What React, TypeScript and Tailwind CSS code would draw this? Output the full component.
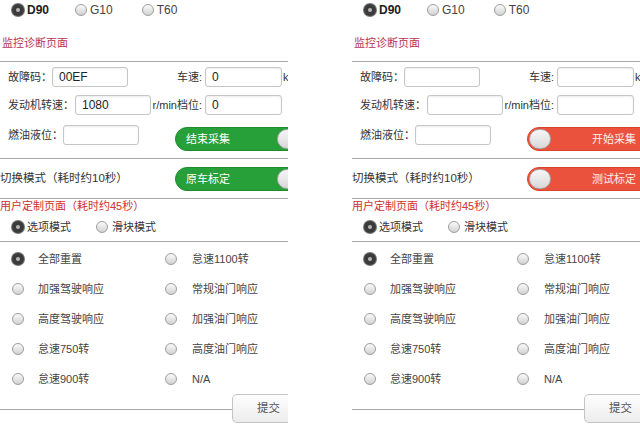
import React from "react";

const font = "font-['Liberation_Sans','Noto_Sans_CJK_SC',sans-serif]";

function Radio({ on = false }: { on?: boolean }) {
  if (on) {
    return (
      <span className="flex h-[12px] w-[12px] shrink-0 items-center justify-center rounded-full bg-[#3b3b3b] shadow-[0_0_0_1px_#777]">
        <span className="h-[4px] w-[4px] rounded-full bg-[#b8b8b8]" />
      </span>
    );
  }
  return (
    <span className="h-[12px] w-[12px] shrink-0 rounded-full border border-[#9d9d9d] bg-linear-to-b from-[#fafafa] to-[#d2d2d2]" />
  );
}

function Field({ value, w }: { value: string; w: string }) {
  return (
    <div
      className={`${w} flex h-[20px] shrink-0 items-center rounded-[3px] border border-[#c6c6c6] bg-white pl-[6px] text-[12px] text-[#222] shadow-[inset_0_1px_2px_rgba(0,0,0,0.08)]`}
    >
      {value}
    </div>
  );
}

function Toggle({ on, label }: { on: boolean; label: string }) {
  // on = green with knob on the right, off = red with knob on the left
  return (
    <div
      className={`relative flex h-[24px] w-[128px] shrink-0 items-center rounded-full border ${
        on ? "border-[#1f8a2e] bg-[#28a039]" : "border-[#d9432f] bg-[#ea523e]"
      }`}
    >
      <span
        className={`text-[11px] text-white ${on ? "pl-[10px]" : "pl-[64px] text-white/90"}`}
      >
        {label}
      </span>
      <span
        className={`absolute top-[1px] h-[20px] w-[22px] rounded-full border border-[#aaa] bg-linear-to-b from-[#f7f7f7] to-[#d8d8d8] ${
          on ? "left-[101px]" : "left-[1px]"
        }`}
      />
    </div>
  );
}

const options = [
  ["全部重置", "怠速1100转"],
  ["加强驾驶响应", "常规油门响应"],
  ["高度驾驶响应", "加强油门响应"],
  ["怠速750转", "高度油门响应"],
  ["怠速900转", "N/A"],
];

function Panel({ filled }: { filled: boolean }) {
  return (
    <div className="h-[424px] w-[288px] shrink-0 overflow-hidden">
      <div className="flex w-[310px] flex-col text-[11px] text-[#333]">
        {/* 车型 */}
        <div className="flex h-[20px] items-center pl-[12px]">
          <Radio on />
          <span className="ml-[3px] text-[12px] font-bold text-[#222]">D90</span>
          <span className="ml-[26px] flex items-center">
            <Radio />
            <span className="ml-[3px] text-[12px] text-[#444]">G10</span>
          </span>
          <span className="ml-[29px] flex items-center">
            <Radio />
            <span className="ml-[3px] text-[12px] text-[#444]">T60</span>
          </span>
        </div>

        {/* 监控诊断页面 */}
        <div className="mt-[15px] h-[16px] pl-[2px] leading-[16px] text-[#b8324e]">监控诊断页面</div>
        <div className="mt-[10px] w-[288px] border-t border-[#a8a8a8]" />

        <div className="mt-[5px] flex items-center pl-[8px]">
          <span className="w-[44px]">故障码：</span>
          <Field value={filled ? "00EF" : ""} w="w-[76px]" />
          <span className="w-[74px] text-right">车速:</span>
          <span className="ml-[3px]">
            <Field value={filled ? "0" : ""} w="w-[77px]" />
          </span>
          <span className="ml-[1px] text-[11px]">k</span>
        </div>

        <div className="mt-[8px] flex items-center pl-[8px]">
          <span className="w-[67px]">发动机转速：</span>
          <Field value={filled ? "1080" : ""} w="w-[76px]" />
          <span className="w-[51px] text-right">r/min档位:</span>
          <span className="ml-[3px]">
            <Field value={filled ? "0" : ""} w="w-[77px]" />
          </span>
        </div>

        <div className="mt-[10px] flex items-start pl-[8px]">
          <span className="flex h-[20px] w-[55px] items-center">燃油液位：</span>
          <Field value="" w="w-[76px]" />
          <span className="ml-[36px] mt-[2px]">
            <Toggle on={filled} label={filled ? "结束采集" : "开始采集"} />
          </span>
        </div>
        <div className="mt-[7px] w-[288px] border-t border-[#a8a8a8]" />

        <div className="mt-[8px] flex h-[24px] items-center">
          <span className="w-[175px] text-[11.5px]">切换模式（耗时约10秒）</span>
          <Toggle on={filled} label={filled ? "原车标定" : "测试标定"} />
        </div>
        <div className="mt-[7px] w-[288px] border-t border-[#a8a8a8]" />

        {/* 用户定制页面 */}
        <div className="h-[14px] leading-[14px] text-[#d22f2f]">用户定制页面（耗时约45秒）</div>
        <div className="mt-[4px] flex h-[20px] items-center pl-[12px]">
          <Radio on />
          <span className="ml-[3px]">选项模式</span>
          <span className="ml-[25px] flex items-center">
            <Radio />
            <span className="ml-[4px]">滑块模式</span>
          </span>
        </div>
        <div className="mt-[4px] w-[288px] border-t border-[#a8a8a8]" />

        <div className="mt-[2px] grid w-[288px] grid-cols-[165px_1fr] text-[#444]">
          {options.map(([a, b], i) => (
            <React.Fragment key={i}>
              <div className="flex h-[30px] items-center pl-[12px]">
                <Radio on={i === 0} />
                <span className="ml-[14px]">{a}</span>
              </div>
              <div className="flex h-[30px] items-center">
                <Radio />
                <span className="ml-[15px]">{b}</span>
              </div>
            </React.Fragment>
          ))}
        </div>

        <div className="flex h-[29px] w-[300px] items-center">
          <div className="mt-[2px] w-[232px] border-t border-[#a8a8a8]" />
          <div className="flex h-[29px] w-[62px] items-center rounded-[5px] border border-[#c4c4c4] bg-linear-to-b from-white to-[#ececec] pl-[24px] text-[11.5px] text-[#555]">
            提交
          </div>
        </div>
      </div>
    </div>
  );
}

export default function App() {
  return (
    <div className={`flex h-[424px] w-[640px] gap-[64px] overflow-hidden bg-white ${font}`}>
      <Panel filled />
      <Panel filled={false} />
    </div>
  );
}
